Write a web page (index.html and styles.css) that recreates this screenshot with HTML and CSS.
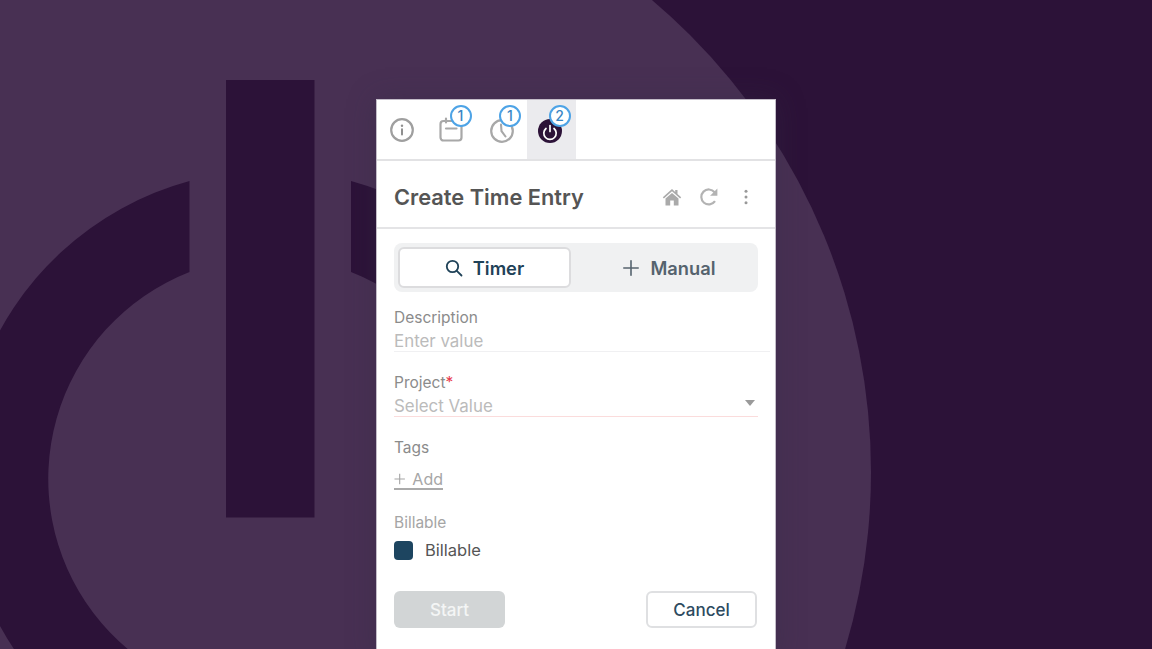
FILE: index.html
```html
<!DOCTYPE html>
<html lang="en">
<head>
<meta charset="utf-8">
<title>Create Time Entry</title>
<link rel="stylesheet" href="styles.css">
</head>
<body>
<div class="stage">
  <svg class="backdrop" viewBox="0 0 1152 649" aria-hidden="true">
    <rect class="bd-dark" width="1152" height="649"/>
    <circle class="bd-light" cx="253" cy="472" r="618"/>
    <path class="bd-ring" fill-rule="evenodd" d="M189.5 181A308 308 0 1 0 351 181V272A222 222 0 1 1 189.5 272Z"/>
    <rect class="bd-dark" x="226" y="80" width="88.500" height="437.500"/>
  </svg>
  <main class="panel">
    <nav class="tabs">
      <div class="tab">
        <svg class="ico" viewBox="0 0 28 28"><circle cx="14" cy="14" r="10.800" fill="none" stroke="#9f9f9f" stroke-width="2.200"/><circle cx="14" cy="9.800" r="1.200" fill="#8f8f8f"/><path d="M14 13.200v5.300" stroke="#8f8f8f" stroke-width="2" stroke-linecap="round"/></svg>
      </div>
      <div class="tab">
        <svg class="ico" viewBox="0 0 28 28"><rect x="3.500" y="5" width="21" height="19.500" rx="3" fill="none" stroke="#a8a8a8" stroke-width="2.200"/><path d="M9 2.500v4M19 2.500v4M9 12.500h10.500" stroke="#a8a8a8" stroke-width="2.200" stroke-linecap="round"/></svg>
        <span class="badge">1</span>
      </div>
      <div class="tab">
        <svg class="ico" viewBox="0 0 28 28"><circle cx="15" cy="15" r="10.800" fill="none" stroke="#a8a8a8" stroke-width="2.200"/><path d="M14 8.500l.5 6.500 4 5.500" fill="none" stroke="#a8a8a8" stroke-width="2.100" stroke-linecap="round"/></svg>
        <span class="badge">1</span>
      </div>
      <div class="tab tab-on">
        <svg class="ico" viewBox="0 0 28 28"><circle cx="14" cy="15" r="12" fill="#2c1238"/><path d="M10 12.500a6.200 6.200 0 1 0 8 0" fill="none" stroke="#fff" stroke-width="1.700" stroke-linecap="round"/><path d="M14 9.500v6" stroke="#fff" stroke-width="1.700" stroke-linecap="round"/></svg>
        <span class="badge">2</span>
      </div>
    </nav>
    <header class="head">
      <h1 class="title">Create Time Entry</h1>
      <div class="head-actions">
        <svg class="hico" viewBox="0 0 20 20"><path fill="#aaa" d="M10 2 .8 10.200l1.100 1.200L10 4.300l8.100 7.100 1.100-1.200L15.500 7V3h-2.300v2zM3.500 11.600V18.500h4.700v-5h3.600v5h4.700v-6.900L10 5.900z"/></svg>
        <svg class="hico" viewBox="0 0 20 20"><path fill="none" stroke="#b3b3b3" stroke-width="2.200" d="M16 14.200A7.500 7.500 0 1 1 15.600 5.200"/><path fill="#b3b3b3" d="M18.400 1.500v7.300h-7.300z"/></svg>
        <svg class="hico" viewBox="0 0 20 20"><circle cx="10" cy="4.200" r="1.500" fill="#999"/><circle cx="10" cy="10" r="1.500" fill="#999"/><circle cx="10" cy="15.800" r="1.500" fill="#999"/></svg>
      </div>
    </header>
    <section class="body">
      <div class="seg">
        <div class="seg-item seg-on">
          <svg class="seg-ico" viewBox="0 0 18 18"><circle cx="7.500" cy="7.500" r="5.700" fill="none" stroke="#1f4258" stroke-width="1.800"/><path d="M11.800 11.800 16.500 16.500" stroke="#1f4258" stroke-width="1.800" stroke-linecap="round"/></svg>
          <span>Timer</span>
        </div>
        <div class="seg-item seg-off">
          <svg class="seg-ico" viewBox="0 0 18 18"><path d="M9 1.800v14.400M1.800 9h14.400" stroke="#55636e" stroke-width="1.600" stroke-linecap="round"/></svg>
          <span>Manual</span>
        </div>
      </div>
      <div class="field field-desc">
        <div class="label">Description</div>
        <div class="value value-desc">Enter value</div>
      </div>
      <div class="field field-project">
        <div class="label">Project<span class="req">*</span></div>
        <div class="value value-project">Select Value<span class="caret"></span></div>
      </div>
      <div class="field field-tags">
        <div class="label">Tags</div>
        <div class="add"><svg class="add-ico" viewBox="0 0 12 12"><path d="M6 .5v11M.5 6h11" stroke="#a6a6a6" stroke-width="1.200"/></svg><span>Add</span></div>
      </div>
      <div class="field field-bill">
        <div class="label label-light">Billable</div>
        <div class="check"><span class="box"></span><span>Billable</span></div>
      </div>
      <div class="actions">
        <div class="btn btn-start">Start</div>
        <div class="btn btn-cancel">Cancel</div>
      </div>
    </section>
  </main>
</div>
</body>
</html>
```
FILE: styles.css
```css
* { box-sizing: border-box; }
html, body { margin: 0; height: 100%; overflow: hidden; }
body { font-family: Inter, "Liberation Sans", sans-serif; background: #2c1238; }
.stage { position: relative; width: 1152px; height: 649px; overflow: hidden; padding: 99px 0 0 376px; }
.backdrop { position: absolute; left: 0; top: 0; width: 1152px; height: 649px; }
.bd-dark, .bd-ring { fill: #2c1238; }
.bd-light { fill: #483053; }
.panel { position: relative; width: 400px; height: 560px; background: #fff; border: 1px solid #c3bdc8; box-shadow: 0 0 26px rgba(50, 45, 70, .35); }
.tabs { display: flex; height: 61px; padding-left: 1px; border-bottom: 2px solid #e2e2e4; }
.tab { position: relative; width: 49.500px; height: 59px; display: flex; align-items: center; justify-content: center; }
.tab-on { background: #ebebee; }
.ico { width: 28px; height: 28px; margin-left: -2px; }
.badge { position: absolute; top: 5px; left: 22px; width: 22px; height: 22px; border-radius: 50%; border: 2px solid #4da3e6; background: #fff; color: #3a86c4; font-size: 14px; font-weight: 500; line-height: 18px; text-align: center; }
.head { display: flex; align-items: center; justify-content: space-between; height: 68px; padding: 6px 19px 0 17px; border-bottom: 2px solid #e4e4e6; }
.title { margin: 0; font-size: 21.800px; font-weight: 600; color: #555; }
.head-actions { display: flex; align-items: center; gap: 17px; }
.hico { width: 20px; height: 20px; }
.body { padding: 14px 17px 0; }
.seg { display: flex; width: 364px; height: 49px; padding: 4px; background: #f0f1f2; border-radius: 8px; }
.seg-item { flex: 1; display: flex; align-items: center; justify-content: center; gap: 10px; font-size: 18.300px; font-weight: 600; color: #55636e; }
.seg-on { flex: 0 0 173px; background: #fff; border: 2px solid #dcdcde; border-radius: 6px; color: #1f4258; }
.seg-off { padding-left: 13px; }
.seg-ico { width: 18px; height: 18px; }
.field { display: flex; flex-direction: column; }
.label { font-size: 15.500px; line-height: 22px; color: #8b8b8b; }
.label-light { color: #a5a5a5; }
.req { color: #e8394d; }
.value { position: relative; font-size: 16.900px; line-height: 24px; height: 23px; color: #bbb; }
.field-desc { margin-top: 15px; }
.value-desc { border-bottom: 1px solid #f0f0f2; margin-right: -12px; }
.field-project { margin-top: 20px; }
.value-project { border-bottom: 1px solid #fbdcdc; }
.caret { position: absolute; right: 3px; top: 6px; border: 5.500px solid transparent; border-top: 6px solid #9a9a9a; border-bottom: 0; }
.field-tags { margin-top: 20px; }
.add { display: flex; align-items: center; gap: 7px; width: 49px; height: 21px; margin-top: 10px; font-size: 16px; color: #a6a6a6; border-bottom: 2px solid #aaa; }
.add-ico { width: 12px; height: 12px; }
.field-bill { margin-top: 22px; }
.check { display: flex; align-items: center; gap: 12px; margin-top: 6px; font-size: 16.500px; line-height: 20px; color: #555; }
.box { width: 19px; height: 19px; border-radius: 4px; background: #1d4560; }
.actions { display: flex; justify-content: space-between; width: 363px; margin-top: 31px; }
.btn { width: 111px; height: 37px; border-radius: 6px; display: flex; align-items: center; justify-content: center; font-size: 17px; font-weight: 500; }
.btn-start { background: #d2d5d6; color: #f4f5f5; }
.btn-cancel { background: #fff; border: 2px solid #dfe0e2; color: #2d4a60; }
```
